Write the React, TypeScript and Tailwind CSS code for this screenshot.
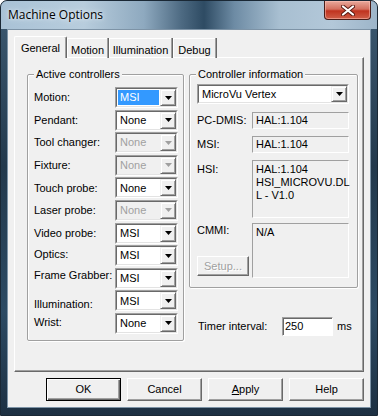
import React from "react";

const Arrow = ({ disabled }: { disabled?: boolean }) => (
  <svg width="7" height="4" viewBox="0 0 7 4">
    <path d="M0 0h7L3.5 4z" fill={disabled ? "#a0a0a0" : "#000"} />
  </svg>
);

interface ComboProps {
  value: string;
  disabled?: boolean;
  selected?: boolean;
  className?: string;
}

const Combo = ({ value, disabled, selected, className }: ComboProps) => (
  <div
    className={`flex border border-t-[#a0a0a0] border-l-[#a0a0a0] border-b-white border-r-white ${className}`}
  >
    <div
      className={`flex flex-1 border border-t-[#696969] border-l-[#696969] border-b-[#e3e3e3] border-r-[#e3e3e3] ${
        disabled ? "bg-[#f0f0f0] text-[#a0a0a0]" : "bg-white text-black"
      }`}
    >
      <div className="flex flex-1 p-[1px]">
        <span
          className={`flex flex-1 items-center pl-[2px] ${
            selected ? "bg-[#3399ff] text-white" : ""
          }`}
        >
          {value}
        </span>
      </div>
      <div className="flex w-[16px] items-center justify-center border border-t-[#f0f0f0] border-l-[#f0f0f0] border-b-[#696969] border-r-[#696969] bg-[#f0f0f0] shadow-[inset_1px_1px_0_#fff,inset_-1px_-1px_0_#a0a0a0]">
        <Arrow disabled={disabled} />
      </div>
    </div>
  </div>
);

const Static = ({ children, className }: { children: React.ReactNode; className?: string }) => (
  <div
    className={`border border-t-[#a0a0a0] border-l-[#a0a0a0] border-b-white border-r-white bg-[#f0f0f0] pl-[3px] leading-[13px] ${className}`}
  >
    {children}
  </div>
);

const Button = ({
  children,
  isDefault,
  disabled,
  className,
}: {
  children: React.ReactNode;
  isDefault?: boolean;
  disabled?: boolean;
  className?: string;
}) => (
  <div
    className={`flex items-center justify-center bg-[#f0f0f0] ${
      isDefault
        ? "border border-black shadow-[inset_1px_1px_0_#fff,inset_-1px_-1px_0_#696969,inset_-2px_-2px_0_#a0a0a0]"
        : "border border-t-white border-l-white border-b-[#696969] border-r-[#696969] shadow-[inset_-1px_-1px_0_#a0a0a0]"
    } ${disabled ? "text-[#a0a0a0] [text-shadow:1px_1px_0_#fff]" : "text-black"} ${className}`}
  >
    {children}
  </div>
);

const controllers = [
  { label: "Motion:", value: "MSI", selected: true },
  { label: "Pendant:", value: "None" },
  { label: "Tool changer:", value: "None", disabled: true },
  { label: "Fixture:", value: "None", disabled: true },
  { label: "Touch probe:", value: "None" },
  { label: "Laser probe:", value: "None", disabled: true },
  { label: "Video probe:", value: "MSI" },
  { label: "Optics:", value: "MSI", labelClass: "mb-[2px]" },
  { label: "Frame Grabber:", value: "MSI", labelClass: "mb-[7px]" },
  { label: "Illumination:", value: "MSI", labelClass: "mt-[6px]" },
  { label: "Wrist:", value: "None", labelClass: "mb-[2px]" },
];

const tabs = [
  { name: "Motion", w: "w-[42px]" },
  { name: "Illumination", w: "w-[64px]" },
  { name: "Debug", w: "w-[44px]" },
];

export default function App() {
  return (
    <div className="relative h-[416px] w-[378px] overflow-hidden rounded-t-[7px] border border-[#1a2835] bg-[linear-gradient(180deg,#3d5a72_0%,#23394c_40%,#2c4a63_75%,#1d3042_100%)] font-['Liberation_Sans',sans-serif] text-[11px] text-black">
      {/* title bar */}
      <div className="flex h-[28px] items-start justify-between bg-[linear-gradient(90deg,#a9c2d6_0%,#b8cddd_22%,#8ea9bf_38%,#4d6a82_48%,#2e4b63_54%,#6d8ba4_62%,#a8bfd1_74%,#b3c8d9_88%,#9db5c9_100%)] pl-[7px] pr-[6px]">
        <span className="mt-[6px] font-['Open_Sans',sans-serif] text-[12px] leading-[16px] [text-shadow:0_0_6px_#e6eef5,0_0_3px_#e6eef5]">
          Machine Options
        </span>
        <div className="flex h-[19px] w-[47px] items-center justify-center rounded-b-[4px] border border-t-0 border-[#4a1d18] bg-[linear-gradient(180deg,#e9a99c_0%,#d4705f_45%,#c0331f_55%,#cf5e48_100%)] shadow-[inset_0_0_0_1px_rgba(255,200,190,0.5)]">
          <svg width="14" height="11" viewBox="0 0 14 11">
            <path
              d="M2 1.5 L12 9.5 M12 1.5 L2 9.5"
              stroke="#5a1a12"
              strokeWidth="4"
              strokeLinecap="round"
            />
            <path
              d="M2 1.5 L12 9.5 M12 1.5 L2 9.5"
              stroke="#fff"
              strokeWidth="2.2"
              strokeLinecap="round"
            />
          </svg>
        </div>
      </div>

      {/* client area */}
      <div className="mx-[6px] flex h-[379px] flex-col border border-[#7d93a6] bg-[#f0f0f0] px-[6px] pt-[6px]">
        {/* tabs */}
        <div className="relative z-10 -mb-[1px] flex h-[22px] items-end">
          <div className="flex h-[22px] w-[53px] items-start justify-center rounded-t-[2px] border border-b-0 border-t-white border-l-white border-r-[#696969] bg-[#f0f0f0] pt-[3px] shadow-[inset_-1px_0_0_#a0a0a0]">
            General
          </div>
          {tabs.map((t) => (
            <div
              key={t.name}
              className={`flex h-[20px] ${t.w} items-start justify-center border-r border-r-[#696969] pt-[4px] shadow-[inset_-1px_0_0_#a0a0a0,inset_1px_1px_0_#fff]`}
            >
              {t.name}
            </div>
          ))}
        </div>

        {/* tab panel */}
        <div className="flex h-[315px] w-[350px] border border-t-white border-l-white border-b-[#696969] border-r-[#696969] shadow-[inset_-1px_-1px_0_#a0a0a0] pl-[12px] pt-[16px]">
          {/* Active controllers */}
          <div className="relative h-[267px] w-[157px] rounded-[2px] border border-[#a0a0a0] shadow-[inset_1px_1px_0_#fff,1px_1px_0_#fff] pl-[6px] pr-[5px] pt-[12px]">
            <span className="absolute -top-[7px] left-[6px] bg-[#f0f0f0] px-[2px] leading-[13px]">
              Active controllers
            </span>
            <div className="flex flex-col gap-[1.6px]">
              {controllers.map((c) => (
                <div key={c.label} className="flex h-[21px] items-center justify-between">
                  <span className={c.labelClass}>{c.label}</span>
                  <Combo
                    value={c.value}
                    disabled={c.disabled}
                    selected={c.selected}
                    className="h-[21px] w-[63px]"
                  />
                </div>
              ))}
            </div>
          </div>

          {/* right column */}
          <div className="ml-[5px] flex flex-col">
            <div className="relative h-[214px] w-[169px] rounded-[2px] border border-[#a0a0a0] shadow-[inset_1px_1px_0_#fff,1px_1px_0_#fff] pl-[7px] pt-[9px]">
              <span className="absolute -top-[7px] left-[6px] bg-[#f0f0f0] px-[2px] leading-[13px]">
                Controller information
              </span>
              <Combo value="MicroVu Vertex" className="h-[20px] w-[152px]" />

              <div className="mt-[8px] flex items-center">
                <span className="w-[55px]">PC-DMIS:</span>
                <Static className="flex h-[17px] w-[97px] items-center">HAL:1.104</Static>
              </div>
              <div className="mt-[7px] flex items-center">
                <span className="w-[55px]">MSI:</span>
                <Static className="flex h-[17px] w-[97px] items-center">HAL:1.104</Static>
              </div>
              <div className="mt-[7px] flex items-start">
                <span className="w-[55px] pt-[1px]">HSI:</span>
                <Static className="h-[58px] w-[97px] pt-[2px]">
                  HAL:1.104
                  <br />
                  HSI_MICROVU.DL
                  <br />L - V1.0
                </Static>
              </div>
              <div className="mt-[5px] flex items-start">
                <div className="flex w-[55px] flex-col">
                  <span className="pt-[1px] leading-[13px]">CMMI:</span>
                  <Button disabled className="mt-[19px] h-[20px] w-[52px]">
                    Setup...
                  </Button>
                </div>
                <Static className="h-[55px] w-[97px] pt-[2px]">N/A</Static>
              </div>
            </div>

            <div className="mt-[29px] flex items-center pl-[9px]">
              <span className="w-[84px]">Timer interval:</span>
              <div className="flex h-[19px] w-[51px] items-center border border-t-[#a0a0a0] border-l-[#a0a0a0] border-b-white border-r-white bg-white pl-[2px] shadow-[inset_1px_1px_0_#696969]">
                250
              </div>
              <span className="ml-[4px]">ms</span>
            </div>
          </div>
        </div>

        {/* buttons */}
        <div className="mt-[6px] flex w-[350px] justify-end gap-[6px]">
          <Button isDefault className="h-[23px] w-[75px]">
            OK
          </Button>
          <Button className="h-[23px] w-[75px]">Cancel</Button>
          <Button className="h-[23px] w-[75px]">
            <span>
              <span className="underline">A</span>pply
            </span>
          </Button>
          <Button className="h-[23px] w-[75px]">Help</Button>
        </div>
      </div>
    </div>
  );
}
